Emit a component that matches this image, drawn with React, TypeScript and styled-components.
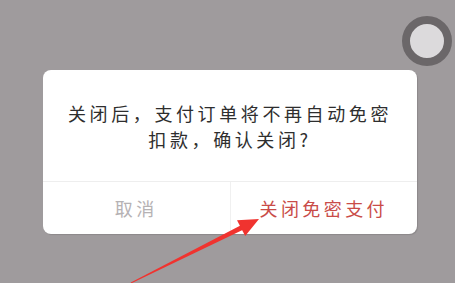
import React from "react";
import styled, { createGlobalStyle } from "styled-components";

const Global = createGlobalStyle`
  html, body {
    margin: 0;
    padding: 0;
    background: #9f9b9d;
  }
  body {
    font-family: "Noto Sans CJK SC", "Noto Sans", sans-serif;
  }
`;

const Screen = styled.div`
  position: relative;
  width: 455px;
  height: 283px;
  overflow: hidden;
  background: #9f9b9d;
  display: flex;
  flex-direction: column;
`;

const TopRow = styled.div`
  display: flex;
  justify-content: flex-end;
  padding: 16px 3px 0 0;
  height: 50px;
`;

const Knob = styled.div`
  width: 34px;
  height: 34px;
  border-radius: 50%;
  border: 8px solid #6b6769;
  background: #dcdadc;
`;

const Dialog = styled.div`
  margin: 4px 0 0 43px;
  width: 374px;
  height: 164px;
  background: #ffffff;
  border-radius: 8px;
  display: flex;
  flex-direction: column;
  box-shadow: 1px 1px 1px rgba(0, 0, 0, 0.12);
  overflow: hidden;
`;

const Message = styled.div`
  flex: 0 0 112px;
  display: flex;
  align-items: center;
  justify-content: center;
  text-align: center;
  font-size: 18px;
  line-height: 26px;
  letter-spacing: 3.6px;
  color: #2e2e2e;
  border-bottom: 1px solid #eeeeee;
  box-sizing: border-box;
`;

const Actions = styled.div`
  flex: 1;
  display: flex;
`;

const Action = styled.div<{ $tone: "muted" | "danger" }>`
  flex: 1;
  display: flex;
  align-items: center;
  justify-content: center;
  font-size: 18px;
  letter-spacing: 3.4px;
  color: ${(p) => (p.$tone === "danger" ? "#c94c48" : "#b6b2b4")};
  & + & {
    border-left: 1px solid #f0f0f0;
  }
`;

const Pointer = styled.svg`
  position: absolute;
  left: 0;
  top: 0;
  pointer-events: none;
`;

export default function App() {
  return (
    <>
      <Global />
      <Screen>
        <TopRow>
          <Knob />
        </TopRow>
        <Dialog>
          <Message>
            <div>
              关闭后，支付订单将不再自动免密
              <br />
              扣款，确认关闭?
            </div>
          </Message>
          <Actions>
            <Action $tone="muted">取消</Action>
            <Action $tone="danger">关闭免密支付</Action>
          </Actions>
        </Dialog>
        <Pointer width="455" height="283" viewBox="0 0 455 283">
          <polygon
            points="131.2,283.4 130.8,282.6 241.9,224.8 244.1,229.2"
            fill="#f0332f"
          />
          <polygon points="259,219 245.2,236 237,220.2" fill="#f0332f" />
        </Pointer>
      </Screen>
    </>
  );
}
